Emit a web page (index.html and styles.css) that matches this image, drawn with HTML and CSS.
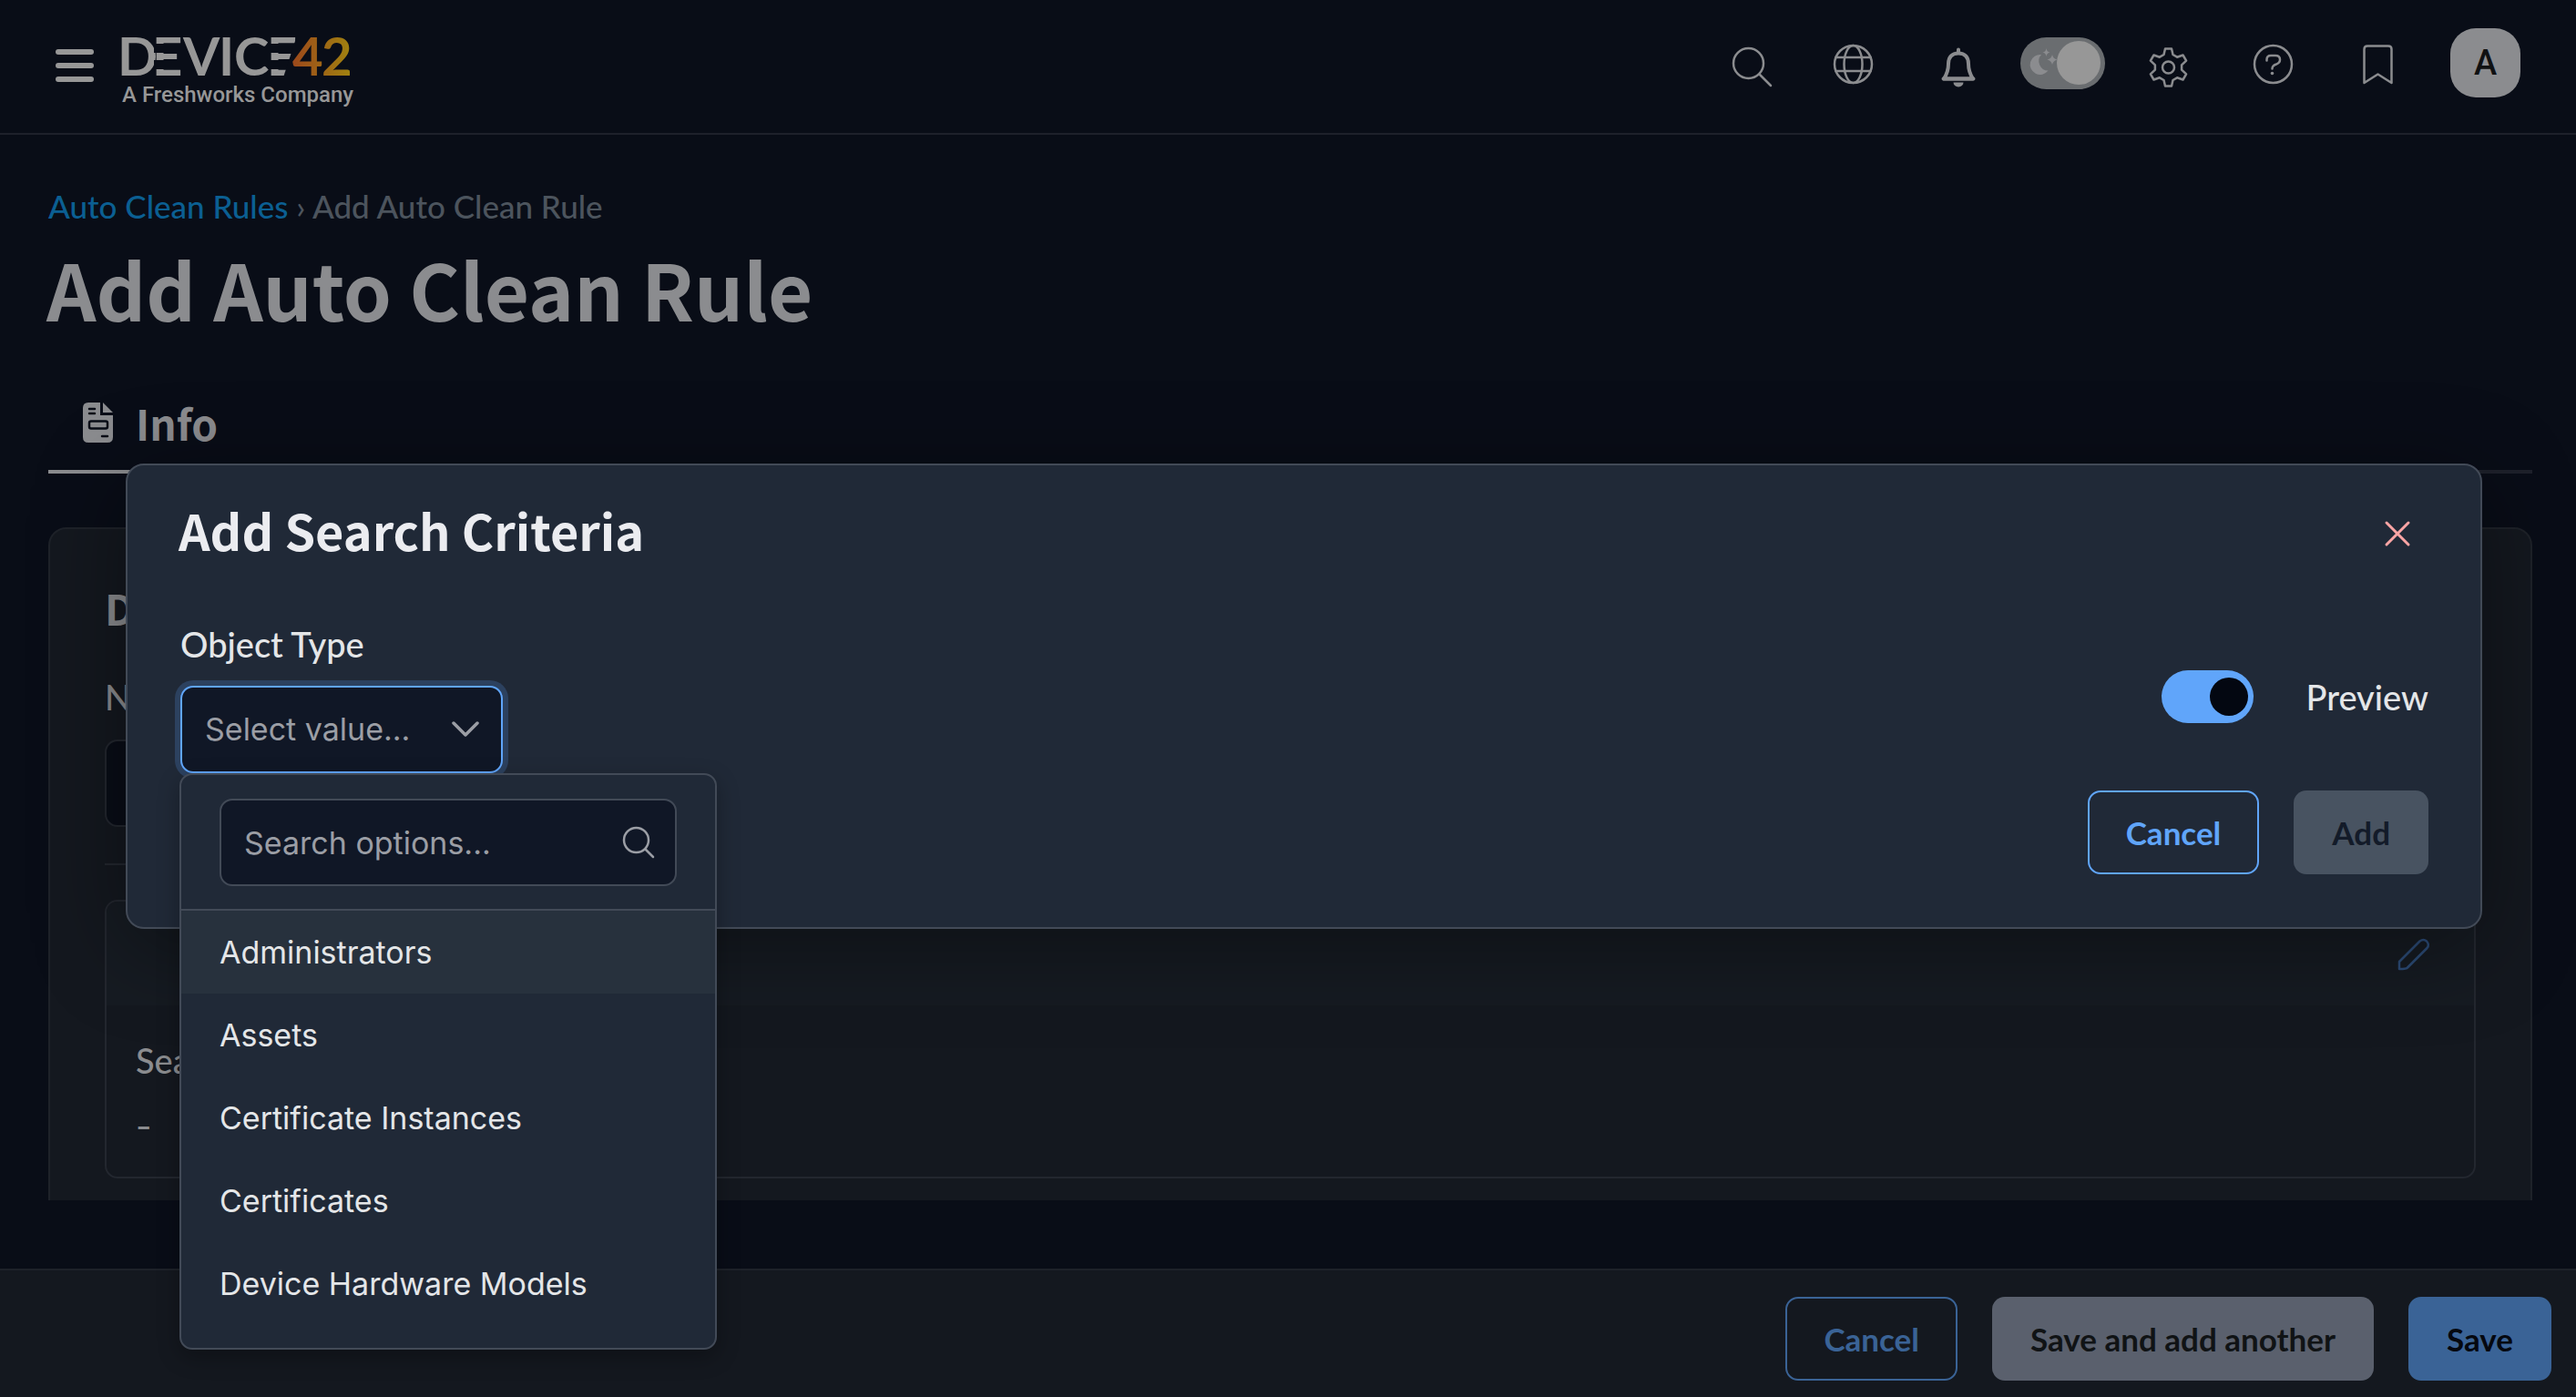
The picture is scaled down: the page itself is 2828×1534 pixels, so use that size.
FILE: index.html
```html
<!DOCTYPE html>
<html lang="en">
<head>
<meta charset="utf-8">
<meta name="viewport" content="width=device-width, initial-scale=1">
<title>Add Auto Clean Rule</title>
<link rel="stylesheet" href="styles.css">
</head>
<body>
<header class="topbar">
  <button class="icon-button menu-button" type="button" aria-label="Menu">
    <svg width="42" height="36" viewBox="0 0 42 36"><g fill="#979797"><rect width="42" height="6" rx="3"/><rect y="15" width="42" height="6" rx="3"/><rect y="30" width="42" height="6" rx="3"/></g></svg>
  </button>
  <a class="brand" href="#" aria-label="Device42, a Freshworks company">
    <svg width="256" height="84" viewBox="0 0 256 84">
      <defs>
        <linearGradient id="brand-gold" gradientUnits="userSpaceOnUse" x1="190" y1="0" x2="250" y2="0"><stop offset="0" stop-color="#9c4a1b"/><stop offset="1" stop-color="#a08010"/></linearGradient>
      </defs>
      <g class="wordmark">
        <text x="-4" y="54">D</text>
        <text x="34" y="54">E</text>
        <text x="68" y="54">V</text>
        <text x="107" y="54">I</text>
        <text x="124" y="54">C</text>
        <text x="160" y="54">E</text>
      </g>
      <g fill="#090d17"><rect x="36" y="19" width="12" height="10"/><rect x="36" y="37" width="12" height="10"/><rect x="162" y="19" width="12" height="10"/><rect x="162" y="37" width="12" height="10"/><path d="M193 10h6v46H178z"/></g>
      <g class="wordmark" fill="url(#brand-gold)">
        <text x="188" y="54" fill="url(#brand-gold)">4</text>
        <text x="220" y="54" fill="url(#brand-gold)">2</text>
      </g>
      <text class="tagline" x="1" y="83">A Freshworks Company</text>
    </svg>
  </a>
  <nav class="tools" aria-label="Tools">
    <button class="icon-button tool tool-first" type="button" aria-label="Search">
      <svg class="line-icon" viewBox="0 0 56 56"><circle cx="23.500" cy="28.500" r="16.500"/><path d="M36 41 48 53"/></svg>
    </button>
    <button class="icon-button tool" type="button" aria-label="Language">
      <svg class="line-icon" viewBox="0 0 56 56"><circle cx="27.500" cy="29.500" r="20.500"/><ellipse cx="27.500" cy="29.500" rx="10" ry="20.500"/><path d="M8.500 22h38M8.500 37h38"/></svg>
    </button>
    <button class="icon-button tool" type="button" aria-label="Notifications">
      <svg class="line-icon bell" viewBox="0 0 56 56"><path d="M28 17.500C20.500 17.500 17 22 17 29 17 37 15 41 12 45.500H44C41 41 39 37 39 29 39 22 35.500 17.500 28 17.500Z"/><path d="M28 13.500v3M11.500 45.500h33"/><path d="M22.500 49.500h11a5.500 5 0 0 1-11 0z" fill="#8b8c8f" stroke="none"/></svg>
    </button>
    <label class="tool theme">
      <input class="theme-input" type="checkbox" checked aria-label="Dark theme">
      <svg class="theme-moon" width="32" height="32" viewBox="0 0 32 32"><path fill="#8b8c8f" d="M14 7A11 11 0 1 0 21.500 24.500A10.500 10.500 0 0 1 14 7ZM19.500 0Q20 4 23.500 4.500 20 5 19.500 9 19 5 15.500 4.500 19 4 19.500 0ZM26 7Q27 11.500 31.500 12.500 27 13.500 26 18 25 13.500 20.500 12.500 25 11.500 26 7Z"/></svg>
    </label>
    <button class="icon-button tool" type="button" aria-label="Settings">
      <svg class="line-icon" viewBox="-28.500 -33 56 56"><path d="M-3.500-20.500 3.500-20.500 5-14 9.600-11.300 16-13.500 19.600-7.300 14.600-2.700V2.700L19.600 7.300 16 13.500 9.600 11.300 5 14 3.500 20.500H-3.500L-5 14-9.600 11.300-16 13.500-19.600 7.300-14.600 2.700V-2.700L-19.600-7.300-16-13.500-9.600-11.300-5-14Z"/><circle r="6.500"/></svg>
    </button>
    <button class="icon-button tool" type="button" aria-label="Help">
      <svg class="line-icon" viewBox="0 0 56 56"><circle cx="28.500" cy="29.500" r="20.500"/><path d="M21.500 25.500V24.500Q21.500 20 26 20H31Q36 20 36 24.500 36 28 32 29.500 27.500 31 27.500 34.500"/><circle cx="27.500" cy="39.500" r="1.800" fill="#8b8c8f" stroke="none"/></svg>
    </button>
    <button class="icon-button tool" type="button" aria-label="Bookmarks">
      <svg class="line-icon" viewBox="0 0 56 56"><path d="M13.500 50V13Q13.500 9.500 17 9.500H40Q43.500 9.500 43.500 13V50L28.500 40.500Z"/></svg>
    </button>
    <button class="avatar" type="button">A</button>
  </nav>
</header>

<main class="page">
  <nav class="crumbs" aria-label="Breadcrumb"><a href="#">Auto Clean Rules</a> › <span>Add Auto Clean Rule</span></nav>
  <h1 class="page-title">Add Auto Clean Rule</h1>
  <div class="tabs">
    <a class="tab" href="#info">
      <svg width="34" height="44" viewBox="0 0 34 44"><path fill="#8b8c8f" d="M6 0H19V14H33V38Q33 44 27 44H6Q0 44 0 38V6Q0 0 6 0ZM22 0 33 11H22Z"/><g fill="none" stroke="#090d17" stroke-width="2.500" stroke-linecap="round"><path d="M7 7h6M7 12h6M21 37h6"/><rect x="7" y="20.500" width="20" height="8" rx="2"/></g></svg>
      Info
    </a>
  </div>
  <section class="panel" id="info">
    <h2 class="panel-title">Details</h2>
    <label class="panel-label" for="rule-name">Name</label>
    <input class="panel-input" id="rule-name" type="text">
    <hr class="rule">
    <div class="criteria">
      <div class="criteria-head">
        <button class="icon-button" type="button" aria-label="Edit search criteria">
          <svg width="36" height="36" viewBox="0 0 36 36" fill="none" stroke="#2c4c78" stroke-width="2.500" stroke-linejoin="round"><path d="M2 34V26L24.500 3.500Q28.500.500 32 3.500 35.500 7.500 32.500 11L11 32.500Q10 34 2 34Z"/></svg>
        </button>
      </div>
      <div class="criteria-body">
        <h3 class="criteria-title">Search Criteria</h3>
        <p class="criteria-value">-</p>
      </div>
    </div>
  </section>
</main>

<footer class="actions">
  <button class="button outline dim" type="button">Cancel</button>
  <button class="button grey" type="button">Save and add another</button>
  <button class="button blue" type="button">Save</button>
</footer>

<div class="overlay">
  <section class="dialog" role="dialog" aria-labelledby="dialog-title">
    <div class="dialog-head">
      <h2 class="dialog-title" id="dialog-title">Add Search Criteria</h2>
      <button class="icon-button close" type="button" aria-label="Close">
        <svg width="28" height="28" viewBox="0 0 28 28" stroke="#fca5a5" stroke-width="3" stroke-linecap="round"><path d="M2 2 26 26M26 2 2 26"/></svg>
      </button>
    </div>
    <div class="dialog-body">
      <div class="field">
        <label class="field-label" for="object-type">Object Type</label>
        <div class="picker">
          <select class="picker-select" id="object-type"><option>Select value...</option></select>
          <svg class="picker-chevron" width="30" height="18" viewBox="0 0 30 18" fill="none" stroke="#9b9ea5" stroke-width="3.500" stroke-linecap="round" stroke-linejoin="round"><path d="M2 2 15 15 28 2"/></svg>
          <div class="menu">
            <div class="menu-search">
              <input class="menu-input" type="text" placeholder="Search options..." aria-label="Search options">
              <svg class="menu-glass" width="36" height="36" viewBox="0 0 36 36" fill="none" stroke="#9b9ea5" stroke-width="2.500" stroke-linecap="round"><circle cx="15.500" cy="15.500" r="13.500"/><path d="M25.500 25.500 34 34"/></svg>
            </div>
            <ul class="options" role="listbox" aria-label="Object Type">
              <li class="option active" role="option" aria-selected="true">Administrators</li>
              <li class="option" role="option">Assets</li>
              <li class="option" role="option">Certificate Instances</li>
              <li class="option" role="option">Certificates</li>
              <li class="option" role="option">Device Hardware Models</li>
            </ul>
          </div>
        </div>
      </div>
      <div class="dialog-side">
        <label class="preview"><input class="switch" type="checkbox" checked>Preview</label>
        <div class="dialog-actions">
          <button class="button outline" type="button">Cancel</button>
          <button class="button muted" type="button" disabled>Add</button>
        </div>
      </div>
    </div>
  </section>
</div>
</body>
</html>
```

FILE: styles.css
```css
* { box-sizing: border-box; }

body {
  margin: 0;
  height: 100vh;
  display: flex;
  flex-direction: column;
  overflow: hidden;
  background: #090d17;
  color: #8b8c8f;
  font: 34px/48px Inter, "Liberation Sans", sans-serif;
}

h1, h2, h3, p, ul { margin: 0; padding: 0; }
button, input, select { font: inherit; }
svg { display: block; overflow: visible; }

.icon-button {
  display: flex;
  align-items: center;
  justify-content: center;
  padding: 0;
  border: 0;
  background: none;
}

/* Top bar */
.topbar {
  display: flex;
  align-items: center;
  height: 148px;
  flex: none;
  padding: 0 61px 8px;
  border-bottom: 2px solid #1e212b;
}
.menu-button { padding-top: 6px; }
.brand { margin-left: 30px; padding-top: 4px; }
.wordmark { font: 700 58px Lato, sans-serif; fill: #979797; }
.tagline { font: 500 24px Roboto, sans-serif; fill: #979797; }
.tools { display: flex; align-items: center; margin-left: auto; }
.tool { width: 115px; height: 76px; }
.tool-first { width: 106px; }
.line-icon {
  width: 56px;
  height: 56px;
  fill: none;
  stroke: #8b8c8f;
  stroke-width: 2.5px;
  stroke-linecap: round;
  stroke-linejoin: round;
}
.bell { stroke-width: 4px; }
.theme { display: flex; align-items: center; justify-content: center; position: relative; }
.theme-input {
  appearance: none;
  display: flex;
  justify-content: flex-end;
  width: 93px;
  height: 57px;
  margin: 0;
  padding: 4px 5px;
  border-radius: 29px;
  background: #6a6d70;
}
.theme-input::before { content: ""; width: 48px; height: 48px; border-radius: 50%; background: #979797; }
.theme-moon { position: absolute; left: 20px; top: 22px; }
.avatar {
  width: 77px;
  height: 76px;
  margin-left: 23px;
  padding: 0;
  border: 0;
  border-radius: 28px;
  background: #8b8c8f;
  color: #101112;
  font: 500 38px/72px Roboto, sans-serif;
}

/* Page */
.page {
  flex: 1;
  min-height: 0;
  overflow: hidden;
  margin-bottom: 75px;
  padding: 54px 48px 0 53px;
}
.crumbs { color: #4c545d; font: 500 35px/48px Lato, sans-serif; }
.crumbs a { color: #0b5f92; text-decoration: none; }
.page-title {
  margin: 16px 0 52px -2px;
  font: 700 85px/100px "Noto Sans CJK SC", "Noto Sans", sans-serif;
}
.tabs { display: flex; border-bottom: 4px solid #1e212b; }
.tab {
  display: flex;
  align-items: center;
  gap: 24px;
  margin-bottom: -4px;
  padding: 14px 38px 20px;
  border-bottom: 4px solid #8b8c8f;
  color: #8b8c8f;
  font: 700 46px/64px "Noto Sans CJK SC", "Noto Sans", sans-serif;
  text-decoration: none;
}
.panel {
  display: flex;
  flex-direction: column;
  margin-top: 59px;
  min-height: 900px;
  padding: 56px 60px;
  border: 2px solid #1e2229;
  border-radius: 20px;
  background: #14181f;
}
.panel-title { font: 700 46px/60px "Noto Sans CJK SC", "Noto Sans", sans-serif; }
.panel-label, .criteria-title, .field-label, .preview {
  font: 500 38px/44px Lato, sans-serif;
}
.panel-label { margin-top: 46px; }
.panel-input {
  width: 800px;
  height: 96px;
  margin: 25px 0 40px;
  padding: 0 26px;
  border: 2px solid #23272f;
  border-radius: 14px;
  background: #090d17;
  color: inherit;
}
.rule { width: 100%; margin: 0; border: 0; border-top: 2px solid #23272f; }
.criteria { margin-top: 38px; border: 2px solid #23272f; border-radius: 14px; }
.criteria-head {
  display: flex;
  justify-content: flex-end;
  height: 114px;
  padding: 40px 48px 0;
  border-radius: 12px 12px 0 0;
  background: #161b22;
}
.criteria-head .icon-button { height: 36px; }
.criteria-body { padding: 38px 32px 32px; }
.criteria-value { margin-top: 26px; font-size: 38px; }

/* Buttons */
.button {
  height: 92px;
  padding: 0 40px;
  border: 2px solid transparent;
  border-radius: 14px;
  font: 700 35px/48px Lato, sans-serif;
}
.outline { border-color: #60a5fa; background: none; color: #60a5fa; }
.outline.dim { border-color: #3a6396; color: #3a6396; }
.grey { background: #5a606d; color: #101315; }
.blue { background: #3a6396; color: #05080f; }
.muted { background: #485361; color: #131b29; }

.actions {
  display: flex;
  justify-content: flex-end;
  align-items: flex-start;
  gap: 38px;
  flex: none;
  padding: 29px 27px 18px;
  border-top: 2px solid #1e2229;
  background: #14181f;
}

/* Dialog */
.overlay { position: absolute; inset: 509px 103px auto 138px; }
.dialog {
  padding: 35px 57px 58px 56px;
  border: 2px solid #424a57;
  border-radius: 20px;
  background: #202937;
  box-shadow: 0 20px 100px rgba(0, 0, 0, 0.4);
  color: #e4e6e8;
}
.dialog-head { display: flex; align-items: center; justify-content: space-between; }
.dialog-title { font: 700 54px/72px "Noto Sans CJK SC", "Noto Sans", sans-serif; color: #ebecf0; }
.close { margin-right: 20px; padding-top: 8px; }
.dialog-body { display: flex; justify-content: space-between; margin-top: 67px; }
.field { display: flex; flex-direction: column; gap: 24px; padding-left: 2px; }
.picker { position: relative; width: 354px; }
.picker-select {
  appearance: none;
  display: block;
  width: 100%;
  height: 96px;
  padding: 0 25px;
  border: 2px solid #60a5fa;
  border-radius: 14px;
  outline: 0;
  background: #101726;
  box-shadow: 0 0 0 6px #2c415f;
  color: #9b9ea5;
}
.picker-chevron { position: absolute; right: 26px; top: 39px; }
.menu {
  position: absolute;
  top: 96px;
  left: -1px;
  width: 590px;
  padding-bottom: 25px;
  border: 2px solid #424a57;
  border-radius: 14px;
  background: #202937;
  box-shadow: 0 8px 24px rgba(0, 0, 0, 0.3);
}
.menu-search { position: relative; padding: 26px 42px 25px; border-bottom: 2px solid #424a57; }
.menu-input {
  display: block;
  width: 100%;
  height: 96px;
  padding: 0 25px;
  border: 2px solid #424a57;
  border-radius: 14px;
  background: #101726;
  color: #e4e6e8;
}
.menu-input::placeholder { color: #9b9ea5; opacity: 1; }
.menu-glass { position: absolute; right: 66px; top: 56px; }
.options { list-style: none; }
.option { padding: 0 42px; line-height: 91px; }
.option.active { background: #27313d; }

.dialog-side { display: flex; flex-direction: column; align-items: flex-end; gap: 74px; padding-top: 51px; }
.preview { display: flex; align-items: center; gap: 58px; }
.switch {
  appearance: none;
  display: flex;
  justify-content: flex-end;
  align-items: center;
  width: 101px;
  height: 58px;
  margin: 0;
  padding-right: 6px;
  border-radius: 29px;
  background: #60a5fa;
}
.switch::before { content: ""; width: 42px; height: 42px; border-radius: 50%; background: #030711; }
.dialog-actions { display: flex; gap: 38px; }
```
